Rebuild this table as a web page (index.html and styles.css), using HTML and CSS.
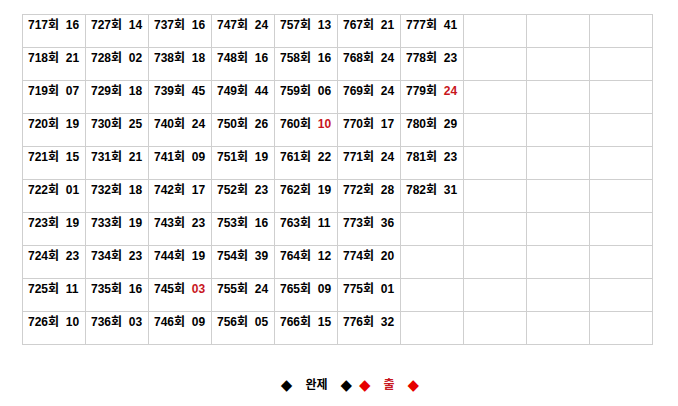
FILE: index.html
```html
<!DOCTYPE html>
<html lang="ko">
<head>
<meta charset="utf-8">
<link rel="stylesheet" href="styles.css">
</head>
<body>
<table class="grid">
<tr><td>717회  16</td><td>727회  14</td><td>737회  16</td><td>747회  24</td><td>757회  13</td><td>767회  21</td><td>777회  41</td><td></td><td></td><td></td></tr>
<tr><td>718회  21</td><td>728회  02</td><td>738회  18</td><td>748회  16</td><td>758회  16</td><td>768회  24</td><td>778회  23</td><td></td><td></td><td></td></tr>
<tr><td>719회  07</td><td>729회  18</td><td>739회  45</td><td>749회  44</td><td>759회  06</td><td>769회  24</td><td>779회  <span class="hit">24</span></td><td></td><td></td><td></td></tr>
<tr><td>720회  19</td><td>730회  25</td><td>740회  24</td><td>750회  26</td><td>760회  <span class="hit">10</span></td><td>770회  17</td><td>780회  29</td><td></td><td></td><td></td></tr>
<tr><td>721회  15</td><td>731회  21</td><td>741회  09</td><td>751회  19</td><td>761회  22</td><td>771회  24</td><td>781회  23</td><td></td><td></td><td></td></tr>
<tr><td>722회  01</td><td>732회  18</td><td>742회  17</td><td>752회  23</td><td>762회  19</td><td>772회  28</td><td>782회  31</td><td></td><td></td><td></td></tr>
<tr><td>723회  19</td><td>733회  19</td><td>743회  23</td><td>753회  16</td><td>763회  11</td><td>773회  36</td><td></td><td></td><td></td><td></td></tr>
<tr><td>724회  23</td><td>734회  23</td><td>744회  19</td><td>754회  39</td><td>764회  12</td><td>774회  20</td><td></td><td></td><td></td><td></td></tr>
<tr><td>725회  11</td><td>735회  16</td><td>745회  <span class="hit">03</span></td><td>755회  24</td><td>765회  09</td><td>775회  01</td><td></td><td></td><td></td><td></td></tr>
<tr><td>726회  10</td><td>736회  03</td><td>746회  09</td><td>756회  05</td><td>766회  15</td><td>776회  32</td><td></td><td></td><td></td><td></td></tr>
</table>
<div class="legend">
<span class="dia">◆</span><span class="word">완제</span><span class="dia">◆</span><span class="dia red">◆</span><span class="word red">출</span><span class="dia red">◆</span>
</div>
</body>
</html>
```
FILE: styles.css
```css
html, body {
  margin: 0;
  padding: 0;
  background: #fff;
}
body {
  padding: 14px 0 0 22px;
  font-family: "Liberation Sans", "Noto Sans CJK KR", sans-serif;
  font-size: 12px;
  font-weight: bold;
  color: #000;
}
.grid {
  border-collapse: collapse;
  table-layout: fixed;
  width: 631px;
}
.grid td {
  border: 1px solid #cfcfcf;
  width: 62px;
  height: 33px;
  padding: 2px 0 0 5px;
  box-sizing: border-box;
  vertical-align: top;
  white-space: pre;
  line-height: 16px;
}
.hit {
  color: #c8161d;
}
.legend {
  margin: 32px 0 0 0;
  width: 631px;
  display: flex;
  justify-content: center;
  align-items: center;
  padding-left: 25px;
  box-sizing: border-box;
  line-height: 16px;
}
.dia {
  font-family: "DejaVu Sans", sans-serif;
  font-size: 15px;
}
.word {
  margin: 0 13px;
}
.red {
  color: #e60000;
}
.word.red {
  color: #c8161d;
}
.dia + .dia {
  margin-left: 7px;
}
```
